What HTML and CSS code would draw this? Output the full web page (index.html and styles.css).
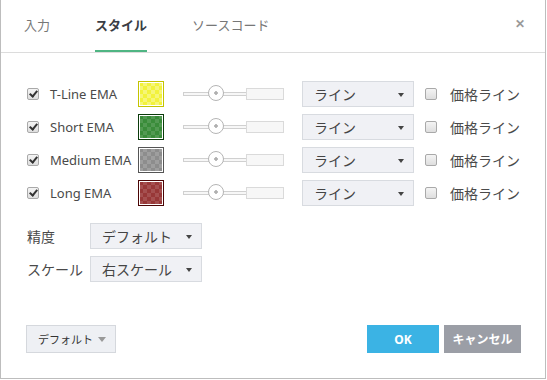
FILE: index.html
```
<!DOCTYPE html>
<html lang="ja">
<head>
    <meta charset="UTF-8">
    <title>スタイル</title>
    <link rel="stylesheet" href="styles.css">
</head>
<body>
    <div class="dialog">
        <div class="tabs">
            <div class="tab">入力</div>
            <div class="tab active">スタイル</div>
            <div class="tab">ソースコード</div>
            <div class="close">&#x2715;</div>
        </div>

        <div class="content">
            <div class="row">
                <span class="check on"></span>
                <span class="name">T-Line EMA</span>
                <span class="swatch yellow"></span>
                <div class="slider"><span class="fill"></span><span class="knob"></span></div>
                <div class="select wide">ライン<span class="caret"></span></div>
                <span class="check"></span>
                <span class="price">価格ライン</span>
            </div>
            <div class="row">
                <span class="check on"></span>
                <span class="name">Short EMA</span>
                <span class="swatch green"></span>
                <div class="slider"><span class="fill"></span><span class="knob"></span></div>
                <div class="select wide">ライン<span class="caret"></span></div>
                <span class="check"></span>
                <span class="price">価格ライン</span>
            </div>
            <div class="row">
                <span class="check on"></span>
                <span class="name">Medium EMA</span>
                <span class="swatch gray"></span>
                <div class="slider"><span class="fill"></span><span class="knob"></span></div>
                <div class="select wide">ライン<span class="caret"></span></div>
                <span class="check"></span>
                <span class="price">価格ライン</span>
            </div>
            <div class="row">
                <span class="check on"></span>
                <span class="name">Long EMA</span>
                <span class="swatch red"></span>
                <div class="slider"><span class="fill"></span><span class="knob"></span></div>
                <div class="select wide">ライン<span class="caret"></span></div>
                <span class="check"></span>
                <span class="price">価格ライン</span>
            </div>

            <div class="options">
                <div class="row">
                    <span class="opt-label">精度</span>
                    <div class="select narrow">デフォルト<span class="caret"></span></div>
                </div>
                <div class="row">
                    <span class="opt-label">スケール</span>
                    <div class="select narrow">右スケール<span class="caret"></span></div>
                </div>
            </div>
        </div>

        <div class="footer">
            <div class="btn-default">デフォルト<span class="caret light"></span></div>
            <div class="actions">
                <div class="btn ok">OK</div>
                <div class="btn cancel">キャンセル</div>
            </div>
        </div>
    </div>
</body>
</html>
```

FILE: styles.css
```
body {
    margin: 0;
    font-family: "Noto Sans", "Noto Sans CJK JP", sans-serif;
    font-size: 13px;
    color: #4a4a4a;
    background: #fff;
}
.dialog {
    width: 546px;
    height: 379px;
    box-sizing: border-box;
    border: 1px solid #bdbdbd;
    border-top: none;
    display: flex;
    flex-direction: column;
}
.tabs {
    height: 53px;
    flex: none;
    box-sizing: border-box;
    border-bottom: 1px solid #dcdcdc;
    padding-left: 23px;
    display: flex;
    gap: 45px;
}
.tab {
    font-size: 13px;
    color: #777;
    height: 52px;
    line-height: 51px;
    box-sizing: border-box;
}
.tab.active {
    color: #3a3d44;
    font-weight: bold;
    border-bottom: 2px solid #4fb583;
}
.close {
    margin-left: auto;
    margin-right: 20px;
    color: #999;
    font-size: 12px;
    font-weight: bold;
    line-height: 47px;
}
.content {
    padding: 28px 0 0 26px;
}
.row {
    display: flex;
    align-items: center;
    height: 26px;
    margin-bottom: 7px;
    white-space: nowrap;
}
.row > * {
    flex: none;
}
.check {
    width: 12px;
    height: 12px;
    box-sizing: border-box;
    border: 1px solid #a9a9a9;
    border-radius: 2px;
    background: linear-gradient(#f4f4f4, #dedede);
    position: relative;
}
.check.on::after {
    content: "";
    position: absolute;
    left: 3px;
    top: 0px;
    width: 3px;
    height: 6px;
    border: solid #333;
    border-width: 0 2px 2px 0;
    transform: rotate(40deg);
}
.name {
    width: 88px;
    margin-left: 11px;
}
.swatch {
    width: 26px;
    height: 26px;
    box-sizing: border-box;
    border: 1px solid;
    box-shadow: inset 0 0 0 1px #fff;
    background-size: 8px 8px;
}
.yellow {
    border-color: #c4c400;
    background-color: #f2f23c;
    background-image: conic-gradient(rgba(255,255,255,.3) 25%, transparent 0 50%, rgba(255,255,255,.3) 0 75%, transparent 0);
}
.green {
    border-color: #0b3b0b;
    background-color: #3a8c3a;
    background-image: conic-gradient(rgba(255,255,255,.12) 25%, transparent 0 50%, rgba(255,255,255,.12) 0 75%, transparent 0);
}
.gray {
    border-color: #555;
    background-color: #8d8d8d;
    background-image: conic-gradient(rgba(255,255,255,.15) 25%, transparent 0 50%, rgba(255,255,255,.15) 0 75%, transparent 0);
}
.red {
    border-color: #4a0505;
    background-color: #983838;
    background-image: conic-gradient(rgba(255,255,255,.12) 25%, transparent 0 50%, rgba(255,255,255,.12) 0 75%, transparent 0);
}
.slider {
    width: 101px;
    height: 4px;
    margin-left: 19px;
    box-sizing: border-box;
    border: 1px solid #d0d0d0;
    background: #f7f7f7;
    position: relative;
}
.slider .fill {
    position: absolute;
    right: -1px;
    top: -5px;
    width: 38px;
    height: 12px;
    box-sizing: border-box;
    border: 1px solid #dadada;
    background: #f7f7f7;
}
.slider .knob {
    position: absolute;
    left: 24px;
    top: -8px;
    width: 16px;
    height: 16px;
    box-sizing: border-box;
    border: 1px solid #b5b5b5;
    border-radius: 50%;
    background: radial-gradient(#b0b0b0 1.5px, #fff 2px);
}
.select {
    height: 26px;
    box-sizing: border-box;
    border: 1px solid #d8dbe0;
    background: #f0f1f5;
    display: flex;
    align-items: center;
    padding-left: 11px;
    color: #444;
    font-size: 14px;
    position: relative;
}
.select.wide {
    width: 112px;
    margin-left: 18px;
    margin-right: 11px;
}
.select.narrow {
    width: 112px;
}
.caret {
    position: absolute;
    right: 9px;
    top: 11px;
    border-left: 3px solid transparent;
    border-right: 3px solid transparent;
    border-top: 4px solid #444;
}
.price {
    margin-left: 13px;
    font-size: 14px;
}
.options {
    margin-top: 17px;
}
.opt-label {
    width: 63px;
    font-size: 14px;
}
.footer {
    margin-top: auto;
    padding: 0 24px 25px 25px;
    display: flex;
    align-items: center;
}
.btn-default {
    width: 90px;
    height: 28px;
    box-sizing: border-box;
    border: 1px solid #d5d8dd;
    background: #eef0f4;
    font-size: 11px;
    color: #333;
    display: flex;
    align-items: center;
    padding-left: 11px;
    position: relative;
}
.caret.light {
    right: 9px;
    top: 11px;
    border-left-width: 4px;
    border-right-width: 4px;
    border-top: 5px solid #999;
}
.actions {
    margin-left: auto;
    display: flex;
    gap: 5px;
}
.btn {
    height: 28px;
    color: #fff;
    font-weight: bold;
    font-size: 12px;
    display: flex;
    align-items: center;
    justify-content: center;
}
.btn.ok {
    width: 72px;
    background: #3bb3e4;
}
.btn.cancel {
    width: 77px;
    background: #9b9ea6;
}
```
